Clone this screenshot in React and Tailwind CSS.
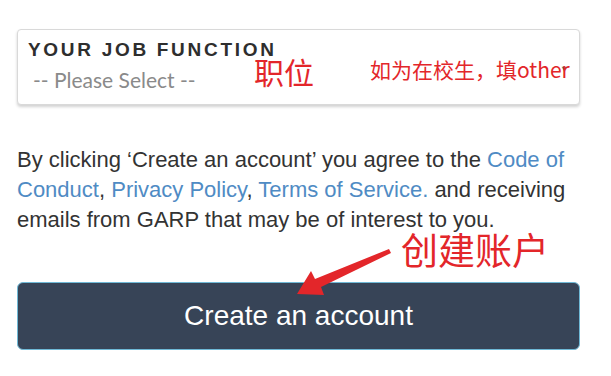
export default function App() {
  return (
    <div className="relative h-[376px] w-[611px] overflow-hidden bg-white" style={{ fontFamily: '"Liberation Sans", Arial, sans-serif' }}>
      <div className="w-[563px] ml-[17px] pt-[29px]">
        <div className="relative h-[76px] rounded-[4px] border border-[#d9d9d9] bg-white shadow-[0_2px_3px_rgba(0,0,0,0.18)]">
          <div className="pl-[10px] pt-[9px] text-[19px] font-bold leading-[22px] tracking-[2.7px] text-[#2e2e2e]">YOUR JOB FUNCTION</div>
          <div className="pl-[15px] pt-[7px] text-[21px] leading-[24px] text-[#8a8a8a]" style={{ fontFamily: 'Lato, "Open Sans", sans-serif' }}>-- Please Select --</div>
          <span className="absolute right-[10px] top-[33px] text-[9px] text-[#666]">▼</span>
        </div>

        <p className="mt-[40px] text-[22px] leading-[30px] text-[#333]">
          By clicking ‘Create an account’ you agree to the <span className="text-[#4f8bc4]">Code of Conduct</span>,{' '}
          <span className="text-[#4f8bc4]">Privacy Policy</span>, <span className="text-[#4f8bc4]">Terms of Service.</span> and receiving emails from GARP that may be of interest to you.
        </p>

        <button className="mt-[47px] flex h-[68px] w-full items-center justify-center rounded-[6px] border border-[#6fb9d6] bg-[#374457] text-[28px] text-white">
          Create an account
        </button>
      </div>

      {/* red annotations */}
      <div className="absolute left-[254px] top-[53px] text-[30px] leading-[36px] text-[#e3262a]" style={{ fontFamily: '"Noto Sans CJK SC", sans-serif' }}>职位</div>
      <div className="absolute left-[370px] top-[55px] text-[21px] leading-[28px] text-[#e3262a]" style={{ fontFamily: '"Noto Sans CJK SC", sans-serif' }}>如为在校生，填other</div>
      <div className="absolute left-[401px] top-[227px] text-[37px] leading-[44px] text-[#e3262a]" style={{ fontFamily: '"Noto Sans CJK SC", sans-serif' }}>创建账户</div>
      <svg className="absolute left-0 top-0" width="611" height="376" viewBox="0 0 611 376">
        <path d="M389 249 L391 253 L321 287 L324 295 L297 294 L311 271 L315 279 Z" fill="#e3262a" />
      </svg>
    </div>
  )
}
